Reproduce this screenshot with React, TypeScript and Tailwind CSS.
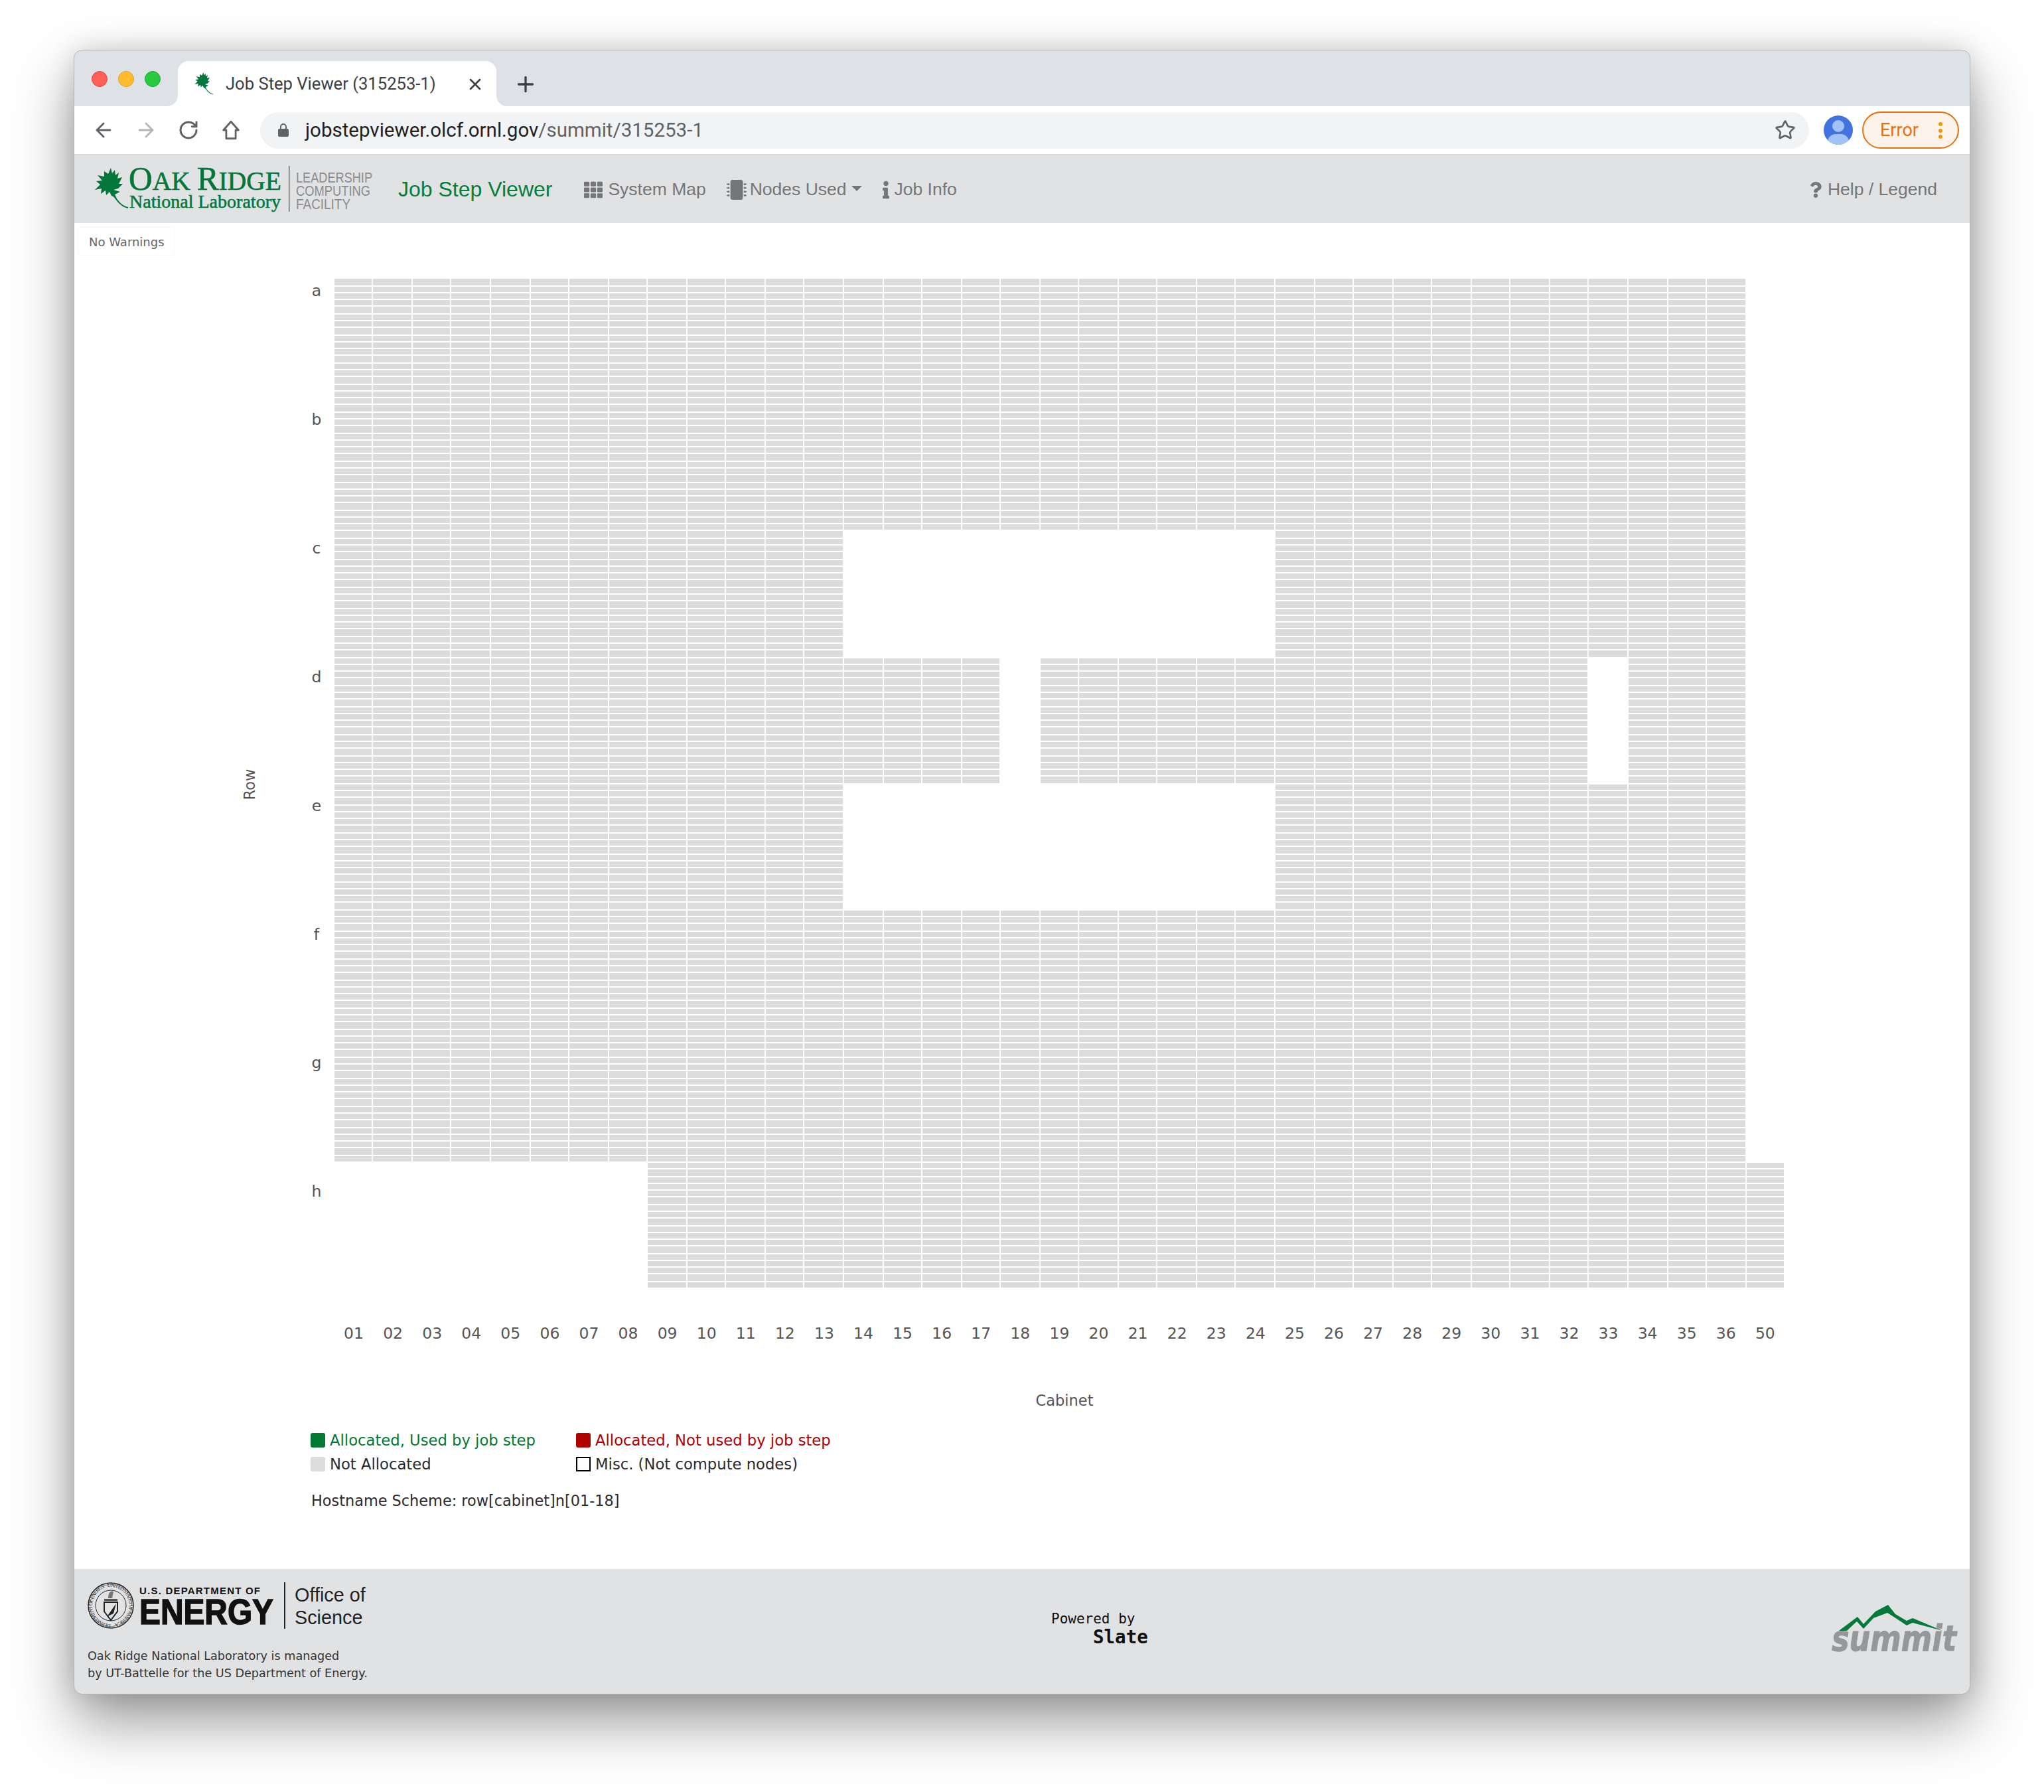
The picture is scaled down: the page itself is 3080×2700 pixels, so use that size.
import React from 'react';
import { ArrowLeft, ArrowRight, RotateCw, Star, X, Plus } from 'lucide-react';
import { FaTh, FaMicrochip, FaInfo, FaQuestion } from 'react-icons/fa';

const ROWS = ['a', 'b', 'c', 'd', 'e', 'f', 'g', 'h'];
const CABINETS = [
  '01', '02', '03', '04', '05', '06', '07', '08', '09', '10', '11', '12', '13', '14', '15', '16', '17', '18', '19',
  '20', '21', '22', '23', '24', '25', '26', '27', '28', '29', '30', '31', '32', '33', '34', '35', '36', '50',
];
const NODES_PER_CABINET = 18;
const LEAF_PATH =
  'M24 0 L26 8 L30 3 L31 11 L36 7 L34 16 L41 14 L36 24 L42 24 L35 31 L28 33 L38 36 L30 40 L33 46 L25 42 L22 36 L17 41 L16 34 L9 39 L10 31 L0 33 L8 25 L2 20 L11 19 L4 11 L14 13 L14 5 L20 9 Z';

const cellX = (i: number) => 2 * Math.round(251.8 + 29.55 * i);
const cellY = (i: number) => 2 * Math.round(210.3 + 5.283 * i);

const hasCabinet = (row: number, col: number) => {
  if (col === 36) return row === 7;
  if ((row === 2 || row === 4) && col >= 13 && col <= 23) return false;
  if (row === 3 && (col === 17 || col === 32)) return false;
  if (row === 7 && col < 8) return false;
  return true;
};

const nodeRects = () => {
  const rects: React.ReactNode[] = [];
  ROWS.forEach((_, row) => {
    CABINETS.forEach((_, col) => {
      if (!hasCabinet(row, col)) return;
      for (let n = 0; n < NODES_PER_CABINET; n++) {
        const i = row * NODES_PER_CABINET + n;
        rects.push(
          <rect
            key={`${row}-${col}-${n}`}
            x={cellX(col)}
            y={cellY(i)}
            width={cellX(col + 1) - 2 - cellX(col)}
            height={cellY(i + 1) - 2 - cellY(i)}
          />,
        );
      }
    });
  });
  return rects;
};

const OakLeaf = ({ className }: { className: string }) => (
  <svg viewBox="0 0 52 62" className={className}>
    <path fill="#03773a" d={LEAF_PATH} />
    <path d="M24 36 C32 46 38 58 50 60" fill="none" stroke="#03773a" strokeWidth="2" />
  </svg>
);

const OrnlLogo = () => (
  <svg viewBox="140 245 430 80" className="w-[430px] h-[80px] shrink-0">
    <g transform="translate(143 253)">
      <path fill="#03773a" d={LEAF_PATH} />
      <path d="M24 36 C32 46 38 58 50 60" fill="none" stroke="#03773a" strokeWidth="2" />
    </g>
    <text x="194" y="286" textLength="230" lengthAdjust="spacingAndGlyphs" stroke="#03773a" strokeWidth="0.6" className="fill-[#03773a] font-['Liberation_Serif',serif] text-[50px]">
      O<tspan className="text-[40px]">AK </tspan>R<tspan className="text-[40px]">IDGE</tspan>
    </text>
    <text x="195" y="313" textLength="228" lengthAdjust="spacingAndGlyphs" stroke="#03773a" strokeWidth="0.5" className="fill-[#03773a] font-['Liberation_Serif',serif] text-[27px]">
      National Laboratory
    </text>
    <rect x="435" y="250" width="1.5" height="69" fill="#6f7072" />
    <g className="fill-[#8b8c8e] font-['Liberation_Sans',sans-serif] text-[22px]">
      <text x="446" y="275" textLength="115" lengthAdjust="spacingAndGlyphs">LEADERSHIP</text>
      <text x="446" y="295" textLength="112" lengthAdjust="spacingAndGlyphs">COMPUTING</text>
      <text x="446" y="315" textLength="82" lengthAdjust="spacingAndGlyphs">FACILITY</text>
    </g>
  </svg>
);

const DoeLogo = () => (
  <svg viewBox="130 2380 430 80" className="w-[430px] h-[80px] block">
    <defs>
      <path id="seal-ring" d="M167 2447 a28 28 0 1 1 0.01 0" />
    </defs>
    <circle cx="167" cy="2419" r="34" fill="none" stroke="#222" strokeWidth="1.5" />
    <circle cx="167" cy="2419" r="31.5" fill="none" stroke="#222" strokeWidth="1" strokeDasharray="1 1" />
    <circle cx="167" cy="2419" r="23" fill="none" stroke="#222" strokeWidth="1" />
    <text className="fill-[#333] font-['Liberation_Serif',serif] text-[8px]">
      <textPath href="#seal-ring" textLength="172">DEPARTMENT OF ENERGY · UNITED STATES OF AMERICA ·</textPath>
    </text>
    <path d="M157 2414 H177 V2428 L167 2441 L157 2428 Z" fill="#e1e2e4" stroke="#222" strokeWidth="2" />
    <path d="M161 2436 L175 2416 L171 2431 Z" fill="#222" />
    <rect x="157" y="2409" width="20" height="3" fill="#555" />
    <path d="M163 2408 C163 2399 167 2396 171 2398 L169 2408 Z" fill="#777" />
    <text x="210" y="2402" textLength="182" className="fill-[#111] font-['Liberation_Sans',sans-serif] font-bold text-[15px]">
      U.S. DEPARTMENT OF
    </text>
    <text x="210" y="2447" textLength="202" lengthAdjust="spacingAndGlyphs" stroke="#111" strokeWidth="1.5" className="fill-[#111] font-['Liberation_Sans',sans-serif] font-bold text-[54px]">
      ENERGY
    </text>
    <rect x="428" y="2384" width="2" height="70" fill="#222" />
    <g className="fill-[#222] font-['Liberation_Sans',sans-serif] text-[28.8px]">
      <text x="444" y="2413">Office of</text>
      <text x="444" y="2447">Science</text>
    </g>
  </svg>
);

const SummitLogo = () => (
  <svg viewBox="2750 2410 200 90" className="w-[200px] h-[90px] block">
    <path
      fill="#03793a"
      d="M2771 2457 L2799 2436 L2808 2447 L2826 2428 L2845 2418 L2856 2432 L2873 2442 L2882 2438 L2927 2457 L2882 2445 L2873 2449 L2855 2437 L2844 2430 L2823 2438 L2808 2454 L2798 2443 L2783 2457 Z"
    />
    <text x="2760" y="2487" textLength="188" lengthAdjust="spacingAndGlyphs" stroke="#96979a" strokeWidth="1" className="fill-[#96979a] font-['DejaVu_Sans',sans-serif] font-bold italic text-[53px]">
      summit
    </text>
  </svg>
);

const NavItem = ({ icon, label, className }: { icon: React.ReactNode; label: string; className?: string }) => (
  <a href="#" className={`flex items-center text-[26.5px] pt-[1px] text-[#757678] ${className ?? ''}`}>
    {icon}
    <span>{label}</span>
  </a>
);

const LegendItem = ({ swatch, label, color }: { swatch: string; label: string; color: string }) => (
  <div className={`flex items-center gap-[7px] h-[36px] ${color}`}>
    <span className={`w-[22px] h-[22px] ${swatch}`} />
    <span>{label}</span>
  </div>
);

const App = () => {
  return (
    <div className="w-[3080px] h-[2700px] bg-white pl-[112px] pt-[76px] font-['Liberation_Sans',sans-serif]">
      <div className="w-[2856px] h-[2476px] flex flex-col rounded-[12px] overflow-hidden bg-white outline outline-1 outline-[#b4b4b4] shadow-[0_40px_90px_rgba(0,0,0,0.42),0_0_40px_rgba(0,0,0,0.14)]">
        {/* tab strip */}
        <div className="h-[84px] bg-[#dee1e6] flex items-end shrink-0">
          <div className="flex gap-[16px] self-center ml-[26px] mt-[2px]">
            <span className="w-[24px] h-[24px] rounded-full bg-[#ff5f57] border border-[#e14942]" />
            <span className="w-[24px] h-[24px] rounded-full bg-[#ffbd2e] border border-[#dfa023]" />
            <span className="w-[24px] h-[24px] rounded-full bg-[#28c93f] border border-[#1aab29]" />
          </div>
          <div className="relative ml-[26px] w-[480px] h-[68px] bg-white rounded-t-[16px] flex items-center">
            <svg viewBox="0 0 16 16" className="absolute -left-[16px] bottom-0 w-[16px] h-[16px]">
              <path d="M16 0 V16 H0 A16 16 0 0 0 16 0 Z" fill="#fff" />
            </svg>
            <svg viewBox="0 0 16 16" className="absolute -right-[16px] bottom-0 w-[16px] h-[16px]">
              <path d="M0 0 V16 H16 A16 16 0 0 1 0 0 Z" fill="#fff" />
            </svg>
            <OakLeaf className="ml-[25px] w-[29px] h-[34px] shrink-0" />
            <span className="ml-[18px] text-[25.6px] text-[#3c4043] font-['Roboto',sans-serif] whitespace-nowrap">Job Step Viewer (315253-1)</span>
            <X className="absolute left-[434px] top-[21px] w-[28px] h-[28px] text-[#3c4043]" strokeWidth={2.2} />
          </div>
          <Plus className="ml-[26px] mb-[15px] w-[36px] h-[36px] text-[#3c4043]" strokeWidth={2.2} />
        </div>

        {/* toolbar */}
        <div className="h-[72px] bg-white flex items-center pl-[12px] shrink-0">
          <div className="w-[64px] flex justify-center"><ArrowLeft className="w-[34px] h-[34px] text-[#5f6368]" strokeWidth={2} /></div>
          <div className="w-[64px] flex justify-center"><ArrowRight className="w-[34px] h-[34px] text-[#b4b6b9]" strokeWidth={2} /></div>
          <div className="w-[64px] flex justify-center"><RotateCw className="w-[32px] h-[32px] text-[#5f6368]" strokeWidth={2.2} /></div>
          <div className="w-[64px] flex justify-center">
            <svg viewBox="0 0 24 24" className="w-[34px] h-[34px]" fill="none" stroke="#5f6368" strokeWidth="2" strokeLinejoin="round">
              <path d="M12 3 L20 12 H17 V21 H7 V12 H4 Z" />
            </svg>
          </div>
          <div className="ml-[12px] w-[2334px] h-[55px] rounded-full bg-[#f1f3f4] flex items-center relative">
            <svg viewBox="0 0 16 20" className="ml-[27px] w-[16px] h-[20px] shrink-0">
              <rect x="0" y="8" width="16" height="12" rx="2" fill="#5f6368" />
              <path d="M4 8 V5 a4 4 0 0 1 8 0 V8" fill="none" stroke="#5f6368" strokeWidth="2" />
            </svg>
            <span className="ml-[25px] text-[29.5px] font-['Roboto',sans-serif] text-[#202124] whitespace-nowrap">
              jobstepviewer.olcf.ornl.gov<span className="text-[#5f6368]">/summit/315253-1</span>
            </span>
            <Star className="absolute right-[20px] top-[11px] w-[32px] h-[32px] text-[#5f6368]" strokeWidth={2} />
          </div>
          <div className="ml-[22px] relative w-[44px] h-[44px] rounded-full bg-[#4273de] overflow-hidden shrink-0">
            <span className="absolute left-[13px] top-[7px] w-[18px] h-[18px] rounded-full bg-[#a1c2fa]" />
            <span className="absolute left-[6px] top-[28px] w-[32px] h-[24px] rounded-full bg-[#a1c2fa]" />
          </div>
          <div className="ml-[14px] w-[146px] h-[56px] rounded-full border-2 border-[#e8710a] bg-[#fdf3ea] flex items-center pl-[25px] relative shrink-0">
            <span className="text-[27px] text-[#e8710a] font-['Roboto',sans-serif]">Error</span>
            <span className="absolute right-[23px] top-[14px] flex flex-col gap-[3.5px]">
              <i className="block w-[6px] h-[6px] rounded-full bg-[#f29900]" />
              <i className="block w-[6px] h-[6px] rounded-full bg-[#f29900]" />
              <i className="block w-[6px] h-[6px] rounded-full bg-[#f29900]" />
            </span>
          </div>
        </div>

        {/* site nav */}
        <nav className="h-[104px] bg-[#e1e2e4] border-t-2 border-[#d9dadc] flex items-center pl-[28px] shrink-0">
          <OrnlLogo />
          <a href="#" className="ml-[30px] text-[32px] text-[#03803c] whitespace-nowrap">Job Step Viewer</a>
          <NavItem className="ml-[48px]" icon={<FaTh className="w-[28px] h-[28px] mr-[8px]" />} label="System Map" />
          <NavItem className="ml-[33px]" icon={<FaMicrochip className="w-[30px] h-[30px] -ml-[2px] mr-[5px]" />} label="Nodes Used" />
          <span className="ml-[7px] mt-[-2px] w-0 h-0 border-x-[8px] border-x-transparent border-t-[8px] border-t-[#757678]" />
          <NavItem className="ml-[31px]" icon={<FaInfo className="w-[10px] h-[28px] mr-[8px]" />} label="Job Info" />
          <NavItem className="ml-auto mr-[49px]" icon={<FaQuestion className="w-[18px] h-[28px] mr-[9px]" />} label="Help / Legend" />
        </nav>

        {/* main */}
        <main className="flex-1 flex flex-col relative min-h-0">
          <div className="mt-[5px] ml-[5px] w-[146px] h-[44px] border border-[#f7f7f7] rounded-[4px] pl-[16px] pt-[11px] text-[18px] leading-[24px] text-[#666] font-['DejaVu_Sans',sans-serif]">
            No Warnings
          </div>
          <svg viewBox="112 385 2856 1755" className="w-[2856px] h-[1755px] shrink-0">
            <g fill="#dcdcdc" shapeRendering="crispEdges">{nodeRects()}</g>
            <g className="fill-[#555] font-['DejaVu_Sans',sans-serif] text-[23.5px]">
              {ROWS.map((r, i) => (
                <text key={r} x="477" y={446 + 193.9 * i} textAnchor="middle">{r}</text>
              ))}
              {CABINETS.map((c, i) => (
                <text key={c} x={533 + 59.08 * i} y="2017" textAnchor="middle">{c}</text>
              ))}
              <text x="1604" y="2118" textAnchor="middle" className="text-[22.5px]">Cabinet</text>
              <text transform="translate(384 1182) rotate(-90)" textAnchor="middle" className="text-[22.5px]">Row</text>
            </g>
          </svg>
          <div className="ml-[356px] mt-[12px] font-['DejaVu_Sans',sans-serif] text-[22.7px] text-[#2a2a2e]">
            <div className="grid grid-cols-[400px_auto] w-fit">
              <LegendItem swatch="bg-[#007a33] rounded-[3px]" label="Allocated, Used by job step" color="text-[#007a33]" />
              <LegendItem swatch="bg-[#b00000] rounded-[3px]" label="Allocated, Not used by job step" color="text-[#b00000]" />
              <LegendItem swatch="bg-[#dcdcdc] rounded-[3px]" label="Not Allocated" color="text-[#2a2a2e]" />
              <LegendItem swatch="border-2 border-black" label="Misc. (Not compute nodes)" color="text-[#2a2a2e]" />
            </div>
            <p className="mt-[21px] ml-[1px] text-[22.4px]">Hostname Scheme: row[cabinet]n[01-18]</p>
          </div>
        </main>

        {/* footer */}
        <footer className="h-[188px] bg-[#e1e2e4] flex shrink-0">
          <div className="w-[1472px] shrink-0 pt-[16px] pl-[18px]">
            <DoeLogo />
            <p className="mt-[22px] ml-[2px] text-[17.6px] leading-[26px] text-[#333] font-['DejaVu_Sans',sans-serif]">
              Oak Ridge National Laboratory is managed
              <br />
              by UT-Battelle for the US Department of Energy.
            </p>
          </div>
          <div className="pt-[62px] font-['DejaVu_Sans_Mono',monospace] text-[#111]">
            <div className="text-[21px] leading-[26px]">Powered by</div>
            <div className="text-[27.5px] leading-[28px] font-bold ml-[63px]">Slate</div>
          </div>
          <div className="ml-auto pt-[46px] pr-[18px]">
            <SummitLogo />
          </div>
        </footer>
      </div>
    </div>
  );
};

export default App;
